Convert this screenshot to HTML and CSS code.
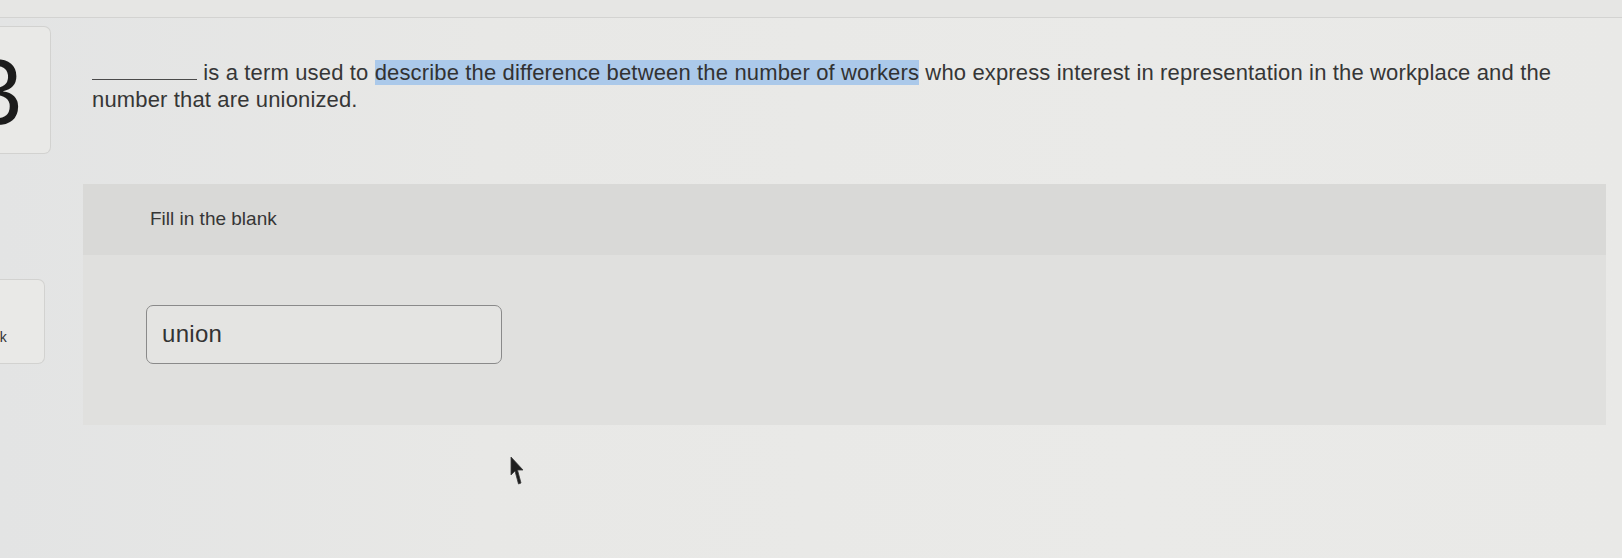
FILE: index.html
```html
<!DOCTYPE html>
<html lang="en">
<head>
<meta charset="utf-8">
<title>Fill in the blank</title>
<link rel="stylesheet" href="styles.css">
</head>
<body>
<div class="topbar"></div>
<div class="layout">
  <aside class="sidebar">
    <div class="card card-num"><span class="num">3</span></div>
    <div class="card card-link"><span class="link-text">ok</span></div>
  </aside>
  <main class="main">
    <p class="question"><span class="blank"></span> is a term used to <span class="hl">describe the difference between the number of workers</span> who express interest in representation in the workplace and the number that are unionized.</p>
    <section class="panel">
      <div class="panel-head">Fill in the blank</div>
      <div class="panel-body">
        <div class="answer">union</div>
      </div>
    </section>
  </main>
</div>
<svg class="cursor" width="15" height="32" viewBox="0 0 15 32"><path d="M1 1 L1 19 L5 15 L8.5 28 L11 27 L7.5 14 L13 14 Z" fill="#1e1e1e" stroke="#3a3a3a" stroke-width="0.8"/></svg>
</body>
</html>
```

FILE: styles.css
```css
html, body {
  margin: 0;
  padding: 0;
}
body {
  width: 1622px;
  height: 558px;
  overflow: hidden;
  background: linear-gradient(90deg, #e3e4e4 0%, #e8e8e6 30%, #eaeae8 70%, #e9e9e7 100%);
  font-family: "Liberation Sans", Arial, sans-serif;
  color: #3b3b3b;
  position: relative;
}
.topbar {
  height: 17px;
  background: #e6e6e4;
  border-bottom: 1px solid #d3d3d1;
}
.layout {
  display: flex;
}
.sidebar {
  width: 83px;
  flex: none;
  display: flex;
  flex-direction: column;
}
.card {
  border: 1px solid #d2d2d0;
  border-left: none;
  border-radius: 0 7px 7px 0;
  background: #e9e9e7;
  overflow: hidden;
}
.card-num {
  width: 50px;
  height: 126px;
  margin-top: 8px;
}
.num {
  display: block;
  font-size: 92px;
  line-height: 92px;
  color: #1c1c1c;
  margin-left: -29px;
  margin-top: 19px;
}
.card-link {
  width: 44px;
  height: 83px;
  margin-top: 125px;
}
.link-text {
  display: block;
  font-size: 14px;
  line-height: 16px;
  color: #333;
  margin-left: -8px;
  margin-top: 49px;
}
.main {
  flex: none;
  width: 1523px;
}
.question {
  margin: 41px 0 0 9px;
  width: 1505px;
  font-size: 22px;
  line-height: 27px;
  letter-spacing: 0.15px;
  color: #363636;
}
.blank {
  display: inline-block;
  width: 105px;
  height: 0;
  border-bottom: 1px solid #4a4a4a;
}
.hl {
  background: #abc9ea;
  color: #323232;
}
.panel {
  margin-top: 71px;
  width: 1523px;
  background: #e0e0de;
}
.panel-head {
  height: 71px;
  background: #d9d9d7;
  padding-left: 67px;
  font-size: 19px;
  line-height: 70px;
  color: #363636;
}
.panel-body {
  height: 170px;
  padding: 50px 0 0 63px;
  box-sizing: border-box;
}
.answer {
  width: 356px;
  height: 59px;
  box-sizing: border-box;
  border: 1.5px solid #8a8a8a;
  border-radius: 7px;
  background: #e4e4e2;
  padding-left: 15px;
  font-size: 24px;
  line-height: 56px;
  letter-spacing: 0.3px;
  color: #333;
}
.cursor {
  position: absolute;
  left: 510px;
  top: 456px;
}
```
